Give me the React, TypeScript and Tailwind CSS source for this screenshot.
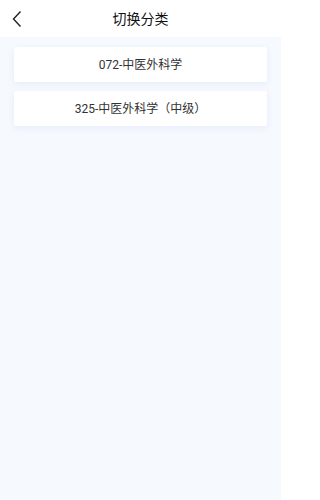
const items = ["072-中医外科学", "325-中医外科学（中级）"];

export default function App() {
  return (
    <div
      className="min-h-[500px] w-[281px] bg-[#f6f9fe] text-[#333]"
      style={{ fontFamily: '"Roboto", "Noto Sans CJK SC", sans-serif' }}
    >
      {/* Header */}
      <div className="relative flex h-[37px] items-center justify-center bg-white pt-[2px]">
        <button className="absolute left-[8px] top-[8px] flex h-[22px] w-[18px] items-center justify-center">
          <svg width="12" height="18" viewBox="0 0 12 18" fill="none">
            <path d="M9.5 1.5 L2.5 9 L9.5 16.5" stroke="#222" strokeWidth="1.4" />
          </svg>
        </button>
        <h1 className="text-[14px] font-normal text-[#111]">切换分类</h1>
      </div>

      {/* List */}
      <div className="flex flex-col gap-[9px] px-[14px] pt-[10px]">
        {items.map((item) => (
          <div
            key={item}
            className="flex h-[35px] items-center justify-center rounded-[2px] bg-white text-[12px] text-[#333] shadow-[0_2px_6px_rgba(200,215,240,0.35)]"
          >
            {item}
          </div>
        ))}
      </div>
    </div>
  );
}
